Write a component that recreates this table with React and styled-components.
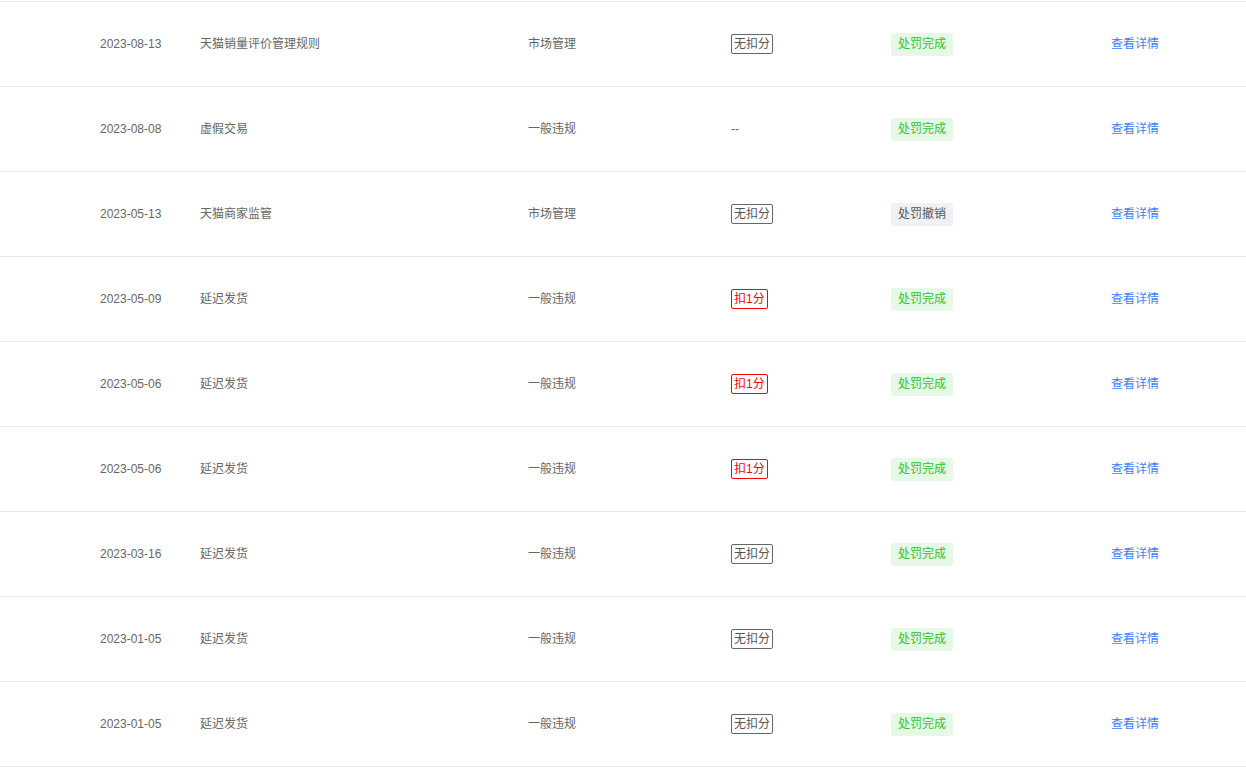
import React from 'react'
import styled, { createGlobalStyle } from 'styled-components';

const GlobalStyle = createGlobalStyle`
    body {
        margin: 0;
        background: #fff;
        font-family: "Liberation Sans", "Noto Sans CJK SC", sans-serif;
    }
`;

const Table = styled.div`
    border-top: 1px solid #e8e8e8;
    margin-top: 1px;
    width: 1246px;
`;

const Row = styled.div`
    display: grid;
    grid-template-columns: 100px 100px 328px 203px 160px 220px 1fr;
    align-items: center;
    height: 84px;
    border-bottom: 1px solid #e8e8e8;
    font-size: 12px;
    color: #666;
`;

const Cell = styled.div`
    white-space: nowrap;
    line-height: 14px;
    margin-top: ${props => props.cjk ? "-1px" : "0"};
`;

const Tag = styled.span`
    display: inline-block;
    height: 18px;
    line-height: 18px;
    padding: 0 2px;
    border: 1px solid ${props => props.red ? "#f00" : "#666"};
    color: ${props => props.red ? "#f00" : "#555"};
    border-radius: 2px;
`;

const Status = styled.span`
    display: inline-block;
    height: 23px;
    line-height: 23px;
    padding: 0 7px;
    border-radius: 3px;
    background: ${props => props.cancelled ? "#f0f1f5" : "#e6f9e6"};
    color: ${props => props.cancelled ? "#555" : "#2fc22f"};
`;

const Link = styled.a`
    color: #3d7eff;
    cursor: pointer;
`;

const rows = [
    { date: "2023-08-13", title: "天猫销量评价管理规则", type: "市场管理", score: "无扣分", status: "处罚完成" },
    { date: "2023-08-08", title: "虚假交易", type: "一般违规", score: null, status: "处罚完成" },
    { date: "2023-05-13", title: "天猫商家监管", type: "市场管理", score: "无扣分", status: "处罚撤销" },
    { date: "2023-05-09", title: "延迟发货", type: "一般违规", score: "扣1分", status: "处罚完成" },
    { date: "2023-05-06", title: "延迟发货", type: "一般违规", score: "扣1分", status: "处罚完成" },
    { date: "2023-05-06", title: "延迟发货", type: "一般违规", score: "扣1分", status: "处罚完成" },
    { date: "2023-03-16", title: "延迟发货", type: "一般违规", score: "无扣分", status: "处罚完成" },
    { date: "2023-01-05", title: "延迟发货", type: "一般违规", score: "无扣分", status: "处罚完成" },
    { date: "2023-01-05", title: "延迟发货", type: "一般违规", score: "无扣分", status: "处罚完成" },
];

export default function App() {
    return (
        <>
            <GlobalStyle />
            <Table>
                {rows.map((r, i) => (
                    <Row key={i}>
                        <Cell />
                        <Cell>{r.date}</Cell>
                        <Cell cjk>{r.title}</Cell>
                        <Cell cjk>{r.type}</Cell>
                        <Cell>
                            {r.score ? <Tag red={r.score !== "无扣分"}>{r.score}</Tag> : "--"}
                        </Cell>
                        <Cell>
                            <Status cancelled={r.status === "处罚撤销"}>{r.status}</Status>
                        </Cell>
                        <Cell cjk><Link>查看详情</Link></Cell>
                    </Row>
                ))}
            </Table>
        </>
    );
}
